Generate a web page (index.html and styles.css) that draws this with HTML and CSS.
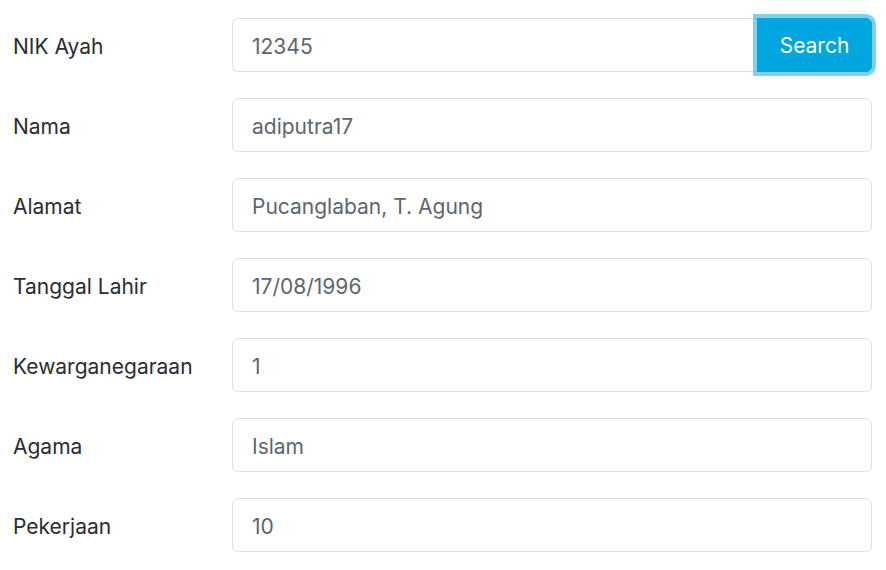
FILE: index.html
```html
<!DOCTYPE html>
<html>
<head>
<meta charset="utf-8">
<link rel="stylesheet" href="styles.css">
</head>
<body>
<form class="form">
  <div class="row">
    <label class="label">NIK Ayah</label>
    <div class="group">
      <input class="input input-joined" type="text" value="12345">
      <button type="button" class="btn">Search</button>
    </div>
  </div>
  <div class="row">
    <label class="label">Nama</label>
    <input class="input" type="text" value="adiputra17">
  </div>
  <div class="row">
    <label class="label">Alamat</label>
    <input class="input" type="text" value="Pucanglaban, T. Agung">
  </div>
  <div class="row">
    <label class="label">Tanggal Lahir</label>
    <input class="input" type="text" value="17/08/1996">
  </div>
  <div class="row">
    <label class="label">Kewarganegaraan</label>
    <input class="input" type="text" value="1">
  </div>
  <div class="row">
    <label class="label">Agama</label>
    <input class="input" type="text" value="Islam">
  </div>
  <div class="row">
    <label class="label">Pekerjaan</label>
    <input class="input" type="text" value="10">
  </div>
</form>
</body>
</html>
```
FILE: styles.css
```css
html, body {
  margin: 0;
  padding: 0;
  background: #ffffff;
}
body {
  font-family: Inter, "Noto Sans", "Liberation Sans", sans-serif;
  font-size: 21px;
  color: #212529;
}
.form {
  display: flex;
  flex-direction: column;
  gap: 26px;
  padding: 18px 14px 0 13px;
}
.row {
  display: flex;
  align-items: center;
  height: 54px;
}
.label {
  width: 219px;
  flex: none;
  font-size: 21px;
  color: #2a2d31;
  padding-top: 2px;
}
.group {
  display: flex;
  width: 640px;
  height: 54px;
}
.input {
  box-sizing: border-box;
  width: 640px;
  height: 54px;
  margin: 0;
  padding: 2px 19px 0;
  border: 1.5px solid #dfe3e8;
  border-radius: 6px;
  font-family: inherit;
  font-size: 21px;
  color: #5c6670;
  background: #fff;
  outline: none;
}
.input-joined {
  flex: 1;
  width: auto;
  border-top-right-radius: 0;
  border-bottom-right-radius: 0;
  border-right: none;
}
.btn {
  box-sizing: border-box;
  width: 115px;
  height: 54px;
  margin: 0;
  padding-top: 2px;
  border: 1px solid #00a6df;
  border-radius: 0 6px 6px 0;
  background: #00a6df;
  color: #ffffff;
  font-family: inherit;
  font-size: 21px;
  box-shadow: 0 0 0 4px rgba(0, 166, 223, 0.5);
  position: relative;
}
```
